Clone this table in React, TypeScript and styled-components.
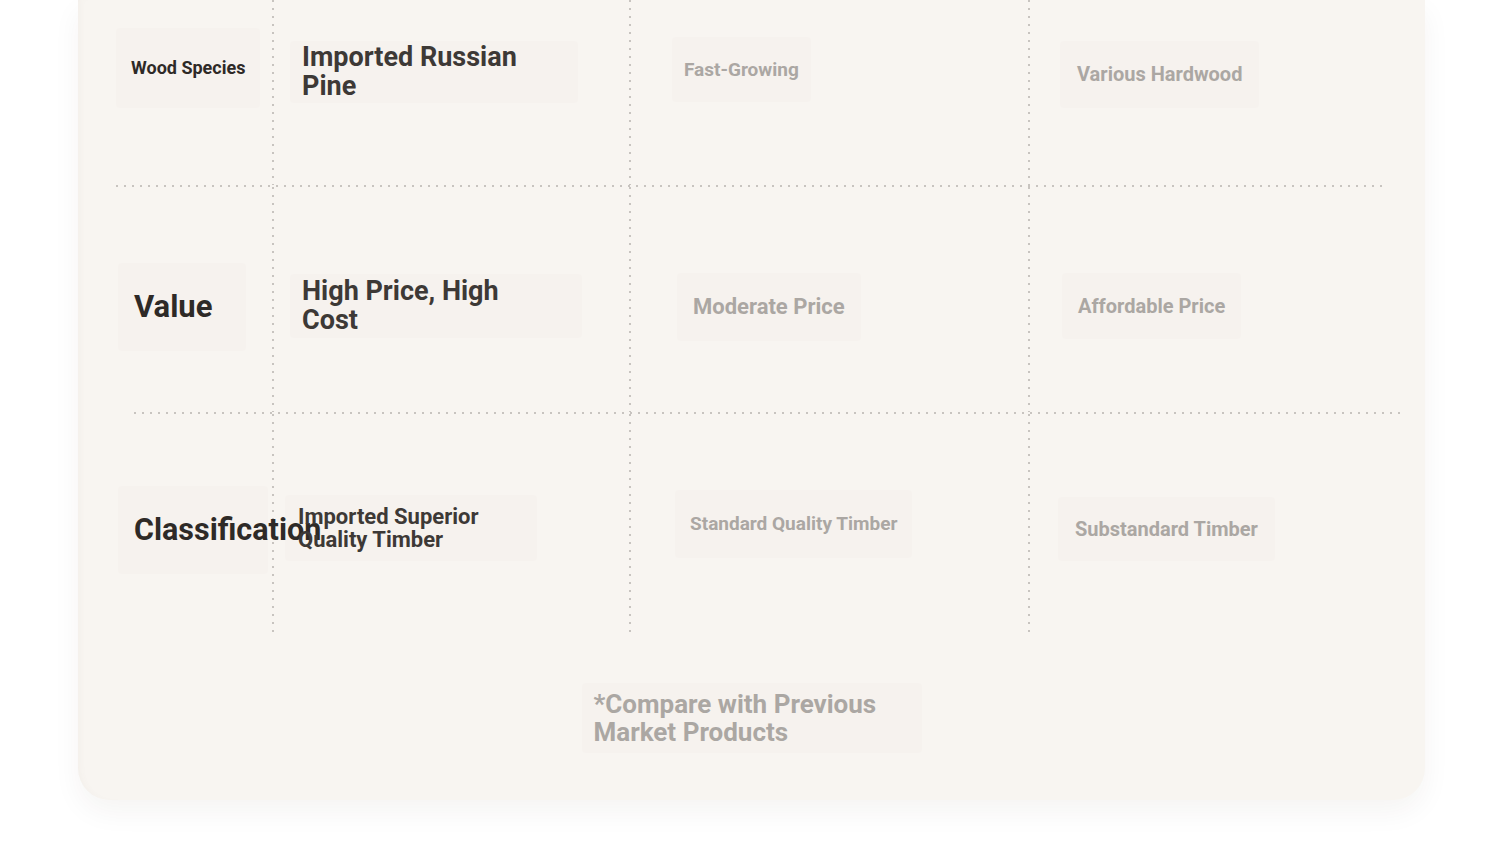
import React from 'react';
import styled, {createGlobalStyle} from 'styled-components';

const GlobalStyle = createGlobalStyle`
  html, body {
    margin: 0;
    padding: 0;
    background: #ffffff;
    font-family: Roboto, "Liberation Sans", sans-serif;
  }
`;

const Page = styled.div`
  padding-left: 78px;
  height: 866px;
  overflow: hidden;
`;

const Card = styled.div`
  width: 1347px;
  background: #f8f5f1;
  border-radius: 0 0 32px 32px;
  box-shadow: 0 12px 28px rgba(60, 40, 20, 0.05), inset 6px 0 8px -6px rgba(120, 100, 80, 0.06);
  display: flex;
  flex-direction: column;
`;

const Row = styled.div<{ $h: number }>`
  display: grid;
  grid-template-columns: 196px 357px 399px 1fr;
  height: ${({$h}) => $h}px;
`;

const Cell = styled.div<{ $line?: boolean; $pl: number; $pt: number; $ext?: number }>`
  position: relative;
  padding: ${({$pt}) => $pt}px 0 0 ${({$pl}) => $pl}px;
  box-sizing: border-box;
  display: flex;
  align-items: flex-start;
  min-width: 0;
  overflow: visible;
  background-image: ${({$line}) =>
          $line ? 'repeating-linear-gradient(to bottom, #c8c4c0 0 2px, transparent 2px 8px)' : 'none'};
  background-size: 2px calc(100% + ${({$ext}) => $ext || 0}px);
  background-repeat: no-repeat;
  background-position: right top;
`;

const Divider = styled.div<{ $ml: number; $mr: number }>`
  height: 2px;
  margin: 0 ${({$mr}) => $mr}px 0 ${({$ml}) => $ml}px;
  background-image: repeating-linear-gradient(to right, #c8c4c0 0 2px, transparent 2px 8px);
`;

const Box = styled.div<{ $py: number; $px: number; $pr?: number; $w?: number }>`
  background: #f6f2ee;
  border-radius: 4px;
  padding: ${({$py}) => $py}px ${({$pr, $px}) => $pr ?? $px}px ${({$py}) => $py}px ${({$px}) => $px}px;
  ${({$w}) => ($w ? `width: ${$w}px; box-sizing: border-box;` : '')}
`;

const Text = styled.div<{ $size: number; $lh: number; $tone: 'dark' | 'mid' | 'muted'; $nowrap?: boolean; $max?: number }>`
  font-family: Roboto, "Liberation Sans", sans-serif;
  font-weight: 700;
  font-size: ${({$size}) => $size}px;
  line-height: ${({$lh}) => $lh}px;
  color: ${({$tone}) => ($tone === 'dark' ? '#2e2a27' : $tone === 'mid' ? '#3d3936' : '#aba7a3')};
  ${({$nowrap}) => ($nowrap ? 'white-space: nowrap;' : '')}
  ${({$max}) => ($max ? `max-width: ${$max}px;` : '')}
  position: relative;
  z-index: 1;
`;

const Footer = styled.div`
  display: flex;
  justify-content: center;
  padding: 51px 0 47px 0;
`;

export default function App() {
  return (
    <Page>
      <GlobalStyle/>
      <Card>
        <Row $h={185}>
          <Cell $line $pl={38} $pt={28}>
            <Box $py={29} $px={15}>
              <Text $size={18} $lh={22} $tone="dark" $nowrap>Wood Species</Text>
            </Box>
          </Cell>
          <Cell $line $pl={16} $pt={41}>
            <Box $py={2} $px={12} $w={288}>
              <Text $size={27} $lh={29} $tone="mid" $max={240}>Imported Russian Pine</Text>
            </Box>
          </Cell>
          <Cell $line $pl={41} $pt={37}>
            <Box $py={21} $px={12}>
              <Text $size={19} $lh={23} $tone="muted" $nowrap>Fast-Growing</Text>
            </Box>
          </Cell>
          <Cell $pl={30} $pt={41}>
            <Box $py={22} $px={17}>
              <Text $size={20} $lh={23} $tone="muted" $nowrap>Various Hardwood</Text>
            </Box>
          </Cell>
        </Row>
        <Divider $ml={38} $mr={40}/>
        <Row $h={225}>
          <Cell $line $pl={40} $pt={76}>
            <Box $py={26} $px={16} $pr={34}>
              <Text $size={31} $lh={36} $tone="dark" $nowrap>Value</Text>
            </Box>
          </Cell>
          <Cell $line $pl={16} $pt={87}>
            <Box $py={3} $px={12} $w={292}>
              <Text $size={27} $lh={29} $tone="mid" $max={240}>High Price, High Cost</Text>
            </Box>
          </Cell>
          <Cell $line $pl={46} $pt={86}>
            <Box $py={21} $px={16}>
              <Text $size={22} $lh={26} $tone="muted" $nowrap>Moderate Price</Text>
            </Box>
          </Cell>
          <Cell $pl={32} $pt={86}>
            <Box $py={21} $px={16}>
              <Text $size={20} $lh={24} $tone="muted" $nowrap>Affordable Price</Text>
            </Box>
          </Cell>
        </Row>
        <Divider $ml={56} $mr={21}/>
        <Row $h={218}>
          <Cell $line $ext={3} $pl={40} $pt={72}>
            <Box $py={26} $px={16} $w={150}>
              <Text $size={30.5} $lh={36} $tone="dark" $nowrap>Classification</Text>
            </Box>
          </Cell>
          <Cell $line $pl={11} $pt={81}>
            <Box $py={10} $px={13} $w={252}>
              <Text $size={22} $lh={23} $tone="mid" $max={240}>Imported Superior Quality Timber</Text>
            </Box>
          </Cell>
          <Cell $line $pl={44} $pt={76}>
            <Box $py={23} $px={15}>
              <Text $size={19} $lh={22} $tone="muted" $nowrap>Standard Quality Timber</Text>
            </Box>
          </Cell>
          <Cell $pl={28} $pt={83}>
            <Box $py={20} $px={17}>
              <Text $size={20} $lh={24} $tone="muted" $nowrap>Substandard Timber</Text>
            </Box>
          </Cell>
        </Row>
        <Footer>
          <Box $py={7} $px={12} $w={340}>
            <Text $size={26} $lh={28} $tone="muted">*Compare with Previous Market Products</Text>
          </Box>
        </Footer>
      </Card>
    </Page>
  );
}
